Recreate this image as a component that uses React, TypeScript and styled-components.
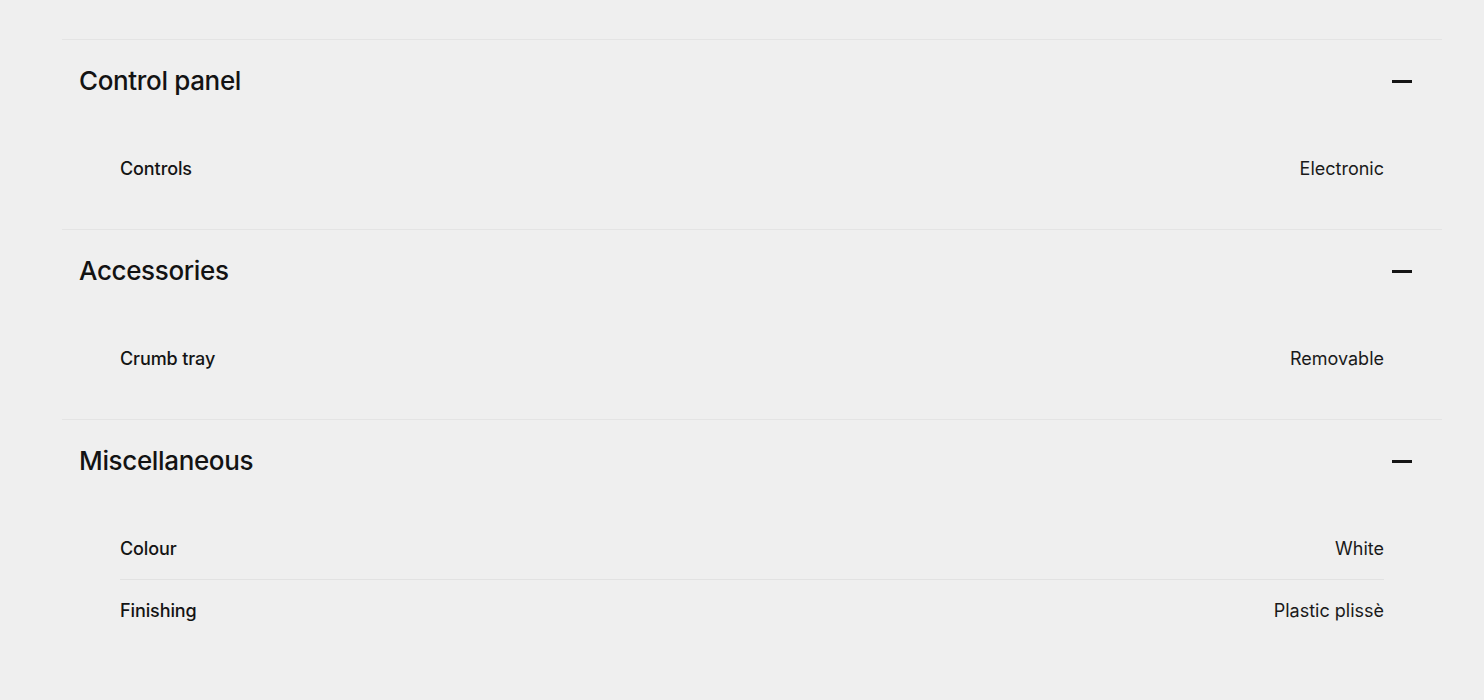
import React from "react";
import styled, { createGlobalStyle } from "styled-components";

const GlobalStyle = createGlobalStyle`
  html, body {
    margin: 0;
    padding: 0;
    background: #efefef;
  }
  body {
    font-family: Inter, "Noto Sans", "Liberation Sans", sans-serif;
    color: #141414;
    -webkit-font-smoothing: antialiased;
  }
`;

type Spec = { label: string; value: string };
type Group = { title: string; specs: Spec[] };

const groups: Group[] = [
  { title: "Control panel", specs: [{ label: "Controls", value: "Electronic" }] },
  { title: "Accessories", specs: [{ label: "Crumb tray", value: "Removable" }] },
  {
    title: "Miscellaneous",
    specs: [
      { label: "Colour", value: "White" },
      { label: "Finishing", value: "Plastic plissè" },
    ],
  },
];

const Page = styled.main`
  padding: 39px 42px 0 62px;
  min-height: 700px;
  box-sizing: border-box;
`;

const List = styled.div`
  width: 1380px;
`;

const Section = styled.section`
  border-top: 1px solid #e4e4e4;
`;

const Header = styled.div`
  height: 80px;
  display: flex;
  align-items: center;
  justify-content: space-between;
  padding: 0 30px 2px 17px;
`;

const Title = styled.h3`
  margin: 0;
  font-size: 26px;
  font-weight: 500;
  letter-spacing: -0.35px;
  color: #131313;
`;

const Minus = styled.span`
  display: block;
  width: 20px;
  height: 3px;
  background: #151515;
  margin-top: 3px;
`;

const Body = styled.div`
  padding: 16px 58px 30px;
`;

const Row = styled.div`
  height: 61px;
  display: flex;
  align-items: center;
  justify-content: space-between;
  & + & {
    border-top: 1px solid #e2e2e2;
  }
`;

const Label = styled.span`
  font-size: 18px;
  font-weight: 500;
  letter-spacing: -0.1px;
  color: #141414;
`;

const Value = styled.span`
  font-size: 18px;
  font-weight: 400;
  color: #1a1a1a;
`;

export default function App() {
  return (
    <>
      <GlobalStyle />
      <Page>
        <List>
          {groups.map((g) => (
            <Section key={g.title}>
              <Header>
                <Title>{g.title}</Title>
                <Minus />
              </Header>
              <Body>
                {g.specs.map((s) => (
                  <Row key={s.label}>
                    <Label>{s.label}</Label>
                    <Value>{s.value}</Value>
                  </Row>
                ))}
              </Body>
            </Section>
          ))}
        </List>
      </Page>
    </>
  );
}
